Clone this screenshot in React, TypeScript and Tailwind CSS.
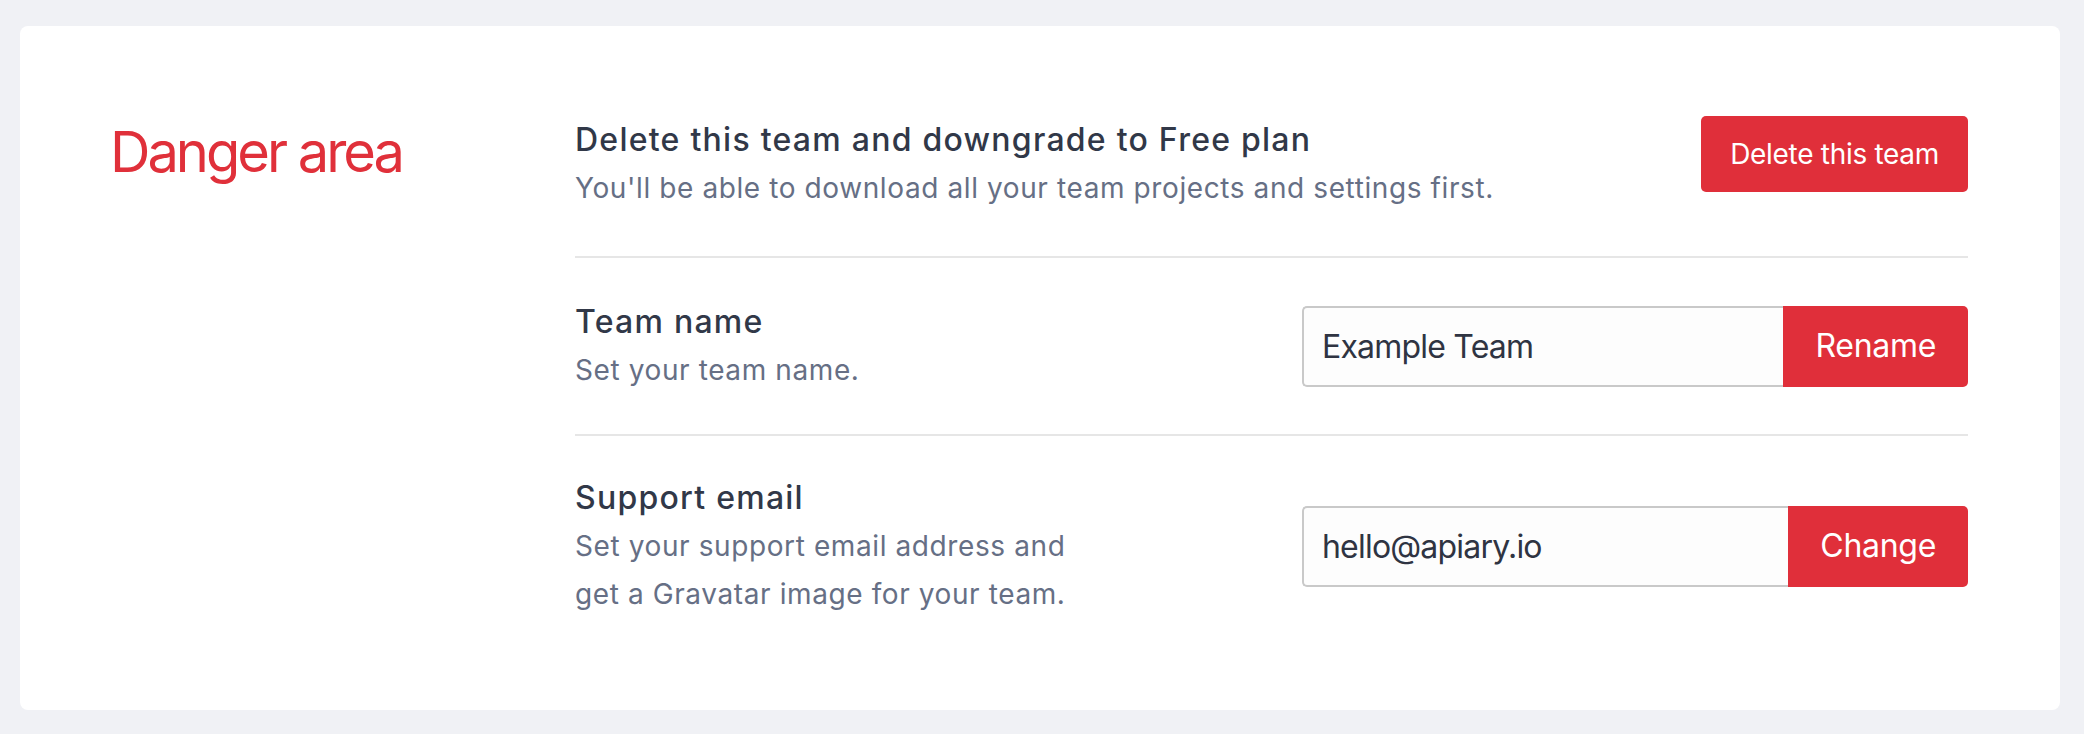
import React from "react";

const font = { fontFamily: "Inter, 'Noto Sans', sans-serif" };

function InputGroup({ value, action }: { value: string; action: string }) {
  return (
    <div className="flex w-[666px] h-[81px]">
      <input
        readOnly
        value={value}
        className="flex-1 min-w-0 h-full border-2 border-r-0 border-[#c9c9c9] rounded-l-[5px] bg-[#fdfdfd] pl-[18px] text-[32px] tracking-[-0.8px] text-[#2f3442] outline-none"
      />
      <button className="h-full px-[32px] bg-[#e02f3a] text-white text-[32px] tracking-[-0.3px] rounded-r-[5px]">
        {action}
      </button>
    </div>
  );
}

export default function App() {
  return (
    <div className="min-h-[734px] bg-[#f0f1f5] pl-[20px] pr-[24px] pt-[26px] pb-[22px] antialiased" style={font}>
      <div className="flex bg-white rounded-[8px] pl-[90px] pr-[92px] pt-[90px] pb-[52px]">
        <div className="w-[465px] shrink-0">
          <h2 className="text-[56px] leading-[72px] tracking-[-3px] text-[#e0303a]">Danger area</h2>
        </div>

        <div className="flex-1 flex flex-col">
          <div className="flex items-start justify-between pb-[44px] border-b-2 border-[#e6e6e6]">
            <div>
              <div className="text-[32px] leading-[48px] font-medium tracking-[1.25px] text-[#313848]">
                Delete this team and downgrade to Free plan
              </div>
              <div className="text-[28px] leading-[48px] tracking-[0.6px] text-[#666f85]">
                You'll be able to download all your team projects and settings first.
              </div>
            </div>
            <button className="h-[76px] px-[29px] rounded-[5px] bg-[#e02f3a] text-white text-[28px] tracking-[-0.3px]">
              Delete this team
            </button>
          </div>

          <div className="flex items-center justify-between py-[40px] border-b-2 border-[#e6e6e6]">
            <div>
              <div className="text-[32px] leading-[48px] font-medium tracking-[1.25px] text-[#313848]">Team name</div>
              <div className="text-[28px] leading-[48px] tracking-[0.6px] text-[#666f85]">Set your team name.</div>
            </div>
            <InputGroup value="Example Team" action="Rename" />
          </div>

          <div className="flex items-center justify-between pt-[38px] pb-[40px]">
            <div>
              <div className="text-[32px] leading-[48px] font-medium tracking-[1.25px] text-[#313848]">Support email</div>
              <div className="text-[28px] leading-[48px] tracking-[0.6px] text-[#666f85]">
                Set your support email address and
                <br />
                get a Gravatar image for your team.
              </div>
            </div>
            <InputGroup value="hello@apiary.io" action="Change" />
          </div>
        </div>
      </div>
    </div>
  );
}
